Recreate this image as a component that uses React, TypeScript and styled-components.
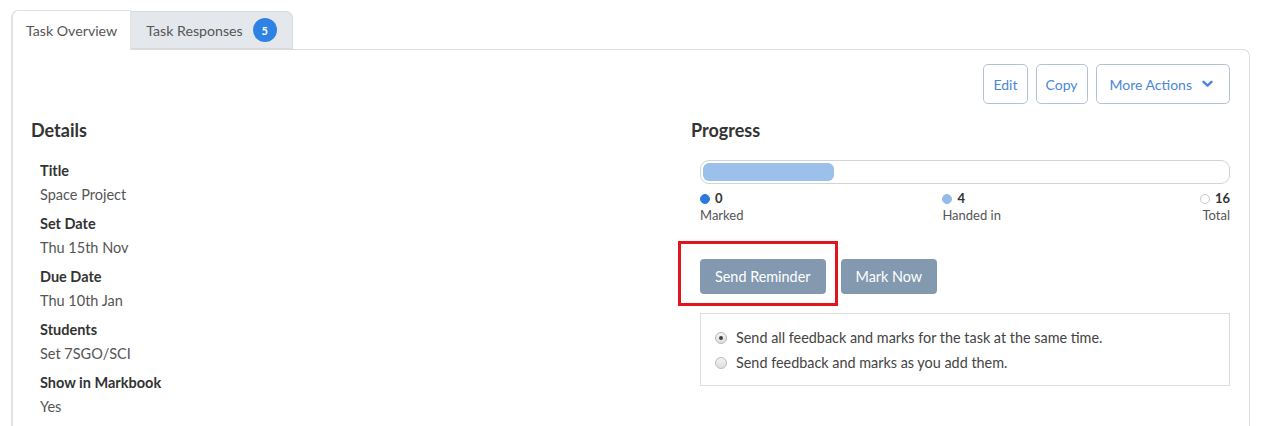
import React from "react";
import styled, { createGlobalStyle } from "styled-components";

const Global = createGlobalStyle`
  html, body { margin: 0; padding: 0; background: #fff; }
  body { font-family: Lato, "Open Sans", sans-serif; color: #333; }
  * { box-sizing: border-box; }
`;

const Page = styled.div`
  padding: 10px 30px 0 11px;
  height: 426px;
  overflow: hidden;
`;

const Tabs = styled.div`
  display: flex;
  align-items: flex-start;
  position: relative;
  z-index: 1;
`;

const Tab = styled.div<{ $active?: boolean }>`
  display: flex;
  align-items: center;
  gap: 10px;
  font-size: 14.2px;
  color: #555;
  padding: ${(p) => (p.$active ? "0 13px 0 13px" : "0 15px 0 15px")};
  height: ${(p) => (p.$active ? "40px" : "38px")};
  margin-top: ${(p) => (p.$active ? "0" : "1px")};
  background: ${(p) => (p.$active ? "#fff" : "#e4e8ec")};
  border: 1px solid ${(p) => (p.$active ? "#e2e2e2" : "#d6dbe0")};
  border-bottom: ${(p) => (p.$active ? "none" : "1px solid #d6dbe0")};
  border-left-width: ${(p) => (p.$active ? "2px" : "0")};
  border-radius: ${(p) => (p.$active ? "7px 0 0 0" : "0 7px 0 0")};
`;

const Badge = styled.span`
  display: inline-flex;
  align-items: center;
  justify-content: center;
  width: 24px;
  height: 24px;
  border-radius: 50%;
  background: #2e82e3;
  color: #fff;
  font-size: 11px;
  font-weight: 700;
`;

const Panel = styled.div`
  margin-top: -1px;
  border: 1px solid #dcdcdc;
  border-left: 2px solid #e2e2e2;
  border-bottom: none;
  border-radius: 0 7px 0 0;
  padding: 14px 19px 0 18px;
  height: 400px;
`;

const Toolbar = styled.div`
  display: flex;
  justify-content: flex-end;
  gap: 8px;
`;

const OutlineButton = styled.button<{ $wide?: boolean }>`
  height: 40px;
  padding: ${(p) => (p.$wide ? "0 16px 0 13px" : "0 9px")};
  border: 1px solid #b3c2d5;
  border-radius: 5px;
  background: #fff;
  color: #4a86d8;
  font-family: inherit;
  font-size: 14px;
  display: inline-flex;
  align-items: center;
  gap: 10px;
`;

const Columns = styled.div`
  display: grid;
  grid-template-columns: 660px 1fr;
  margin-top: 14px;
`;

const Heading = styled.h2`
  margin: 0;
  font-size: 18px;
  line-height: 24px;
  font-weight: 700;
  color: #333;
`;

const DetailList = styled.dl`
  margin: 17px 0 0 9px;
`;

const Label = styled.dt`
  font-size: 14.5px;
  line-height: 24px;
  font-weight: 700;
  color: #333;
`;

const Value = styled.dd`
  margin: 0 0 5px;
  font-size: 14.5px;
  line-height: 24px;
  color: #555;
`;

const RightCol = styled.div`
  padding-left: 9px;
  & > h2 { margin-left: -9px; }
`;

const Bar = styled.div`
  margin-top: 18px;
  height: 24px;
  border: 1px solid #d3d3d3;
  border-radius: 9px;
  padding: 2px;
`;

const Fill = styled.div`
  height: 100%;
  background: #9bc1ea;
  border-radius: 6px;
`;

const Legend = styled.div`
  display: flex;
  justify-content: space-between;
  margin-top: 6px;
`;

const LegendItem = styled.div<{ $right?: boolean }>`
  display: flex;
  flex-direction: column;
  align-items: ${(p) => (p.$right ? "flex-end" : "flex-start")};
  font-size: 13px;
  line-height: 17px;
  color: #555;
`;

const Count = styled.div`
  display: flex;
  align-items: center;
  gap: 5px;
  font-weight: 700;
  color: #333;
`;

const Dot = styled.span<{ $color?: string }>`
  width: 10px;
  height: 10px;
  border-radius: 50%;
  background: ${(p) => p.$color || "#fff"};
  border: 1px solid ${(p) => p.$color || "#c8c8c8"};
`;

const Actions = styled.div`
  display: flex;
  gap: 15px;
  margin-top: 35px;
`;

const SolidButton = styled.button`
  position: relative;
  height: 35px;
  padding: 0 15px;
  border: none;
  border-radius: 4px;
  background: #8299b0;
  color: #fff;
  font-family: inherit;
  font-size: 14.4px;
`;

const Highlight = styled.span`
  position: absolute;
  left: -22px;
  top: -18px;
  width: 160px;
  height: 65px;
  border: 3px solid #e3141d;
  pointer-events: none;
`;

const OptionBox = styled.div`
  margin-top: 19px;
  border: 1px solid #dcdcdc;
  padding: 11px 14px 10px;
`;

const Option = styled.label`
  display: flex;
  align-items: center;
  gap: 9px;
  font-size: 14.4px;
  line-height: 25px;
  color: #444;
`;

const Radio = styled.span<{ $checked?: boolean }>`
  width: 12px;
  height: 12px;
  border-radius: 50%;
  border: 1px solid #b9b9b9;
  background: linear-gradient(#f4f4f4, #dedede);
  display: inline-flex;
  align-items: center;
  justify-content: center;
  &::after {
    content: "";
    width: 4px;
    height: 4px;
    border-radius: 50%;
    background: ${(p) => (p.$checked ? "#444" : "transparent")};
  }
`;

const Chevron = () => (
  <svg width="11" height="8" viewBox="0 0 11 8" aria-hidden>
    <path d="M1.5 1.8 L5.5 5.6 L9.5 1.8" fill="none" stroke="#4a86d8" strokeWidth="2.4" strokeLinecap="round" strokeLinejoin="round" />
  </svg>
);

const details: [string, string][] = [
  ["Title", "Space Project"],
  ["Set Date", "Thu 15th Nov"],
  ["Due Date", "Thu 10th Jan"],
  ["Students", "Set 7SGO/SCI"],
  ["Show in Markbook", "Yes"],
];

export default function App() {
  const handedIn = 4;
  const total = 16;
  return (
    <Page>
      <Global />
      <Tabs>
        <Tab $active>Task Overview</Tab>
        <Tab>
          Task Responses <Badge>5</Badge>
        </Tab>
      </Tabs>
      <Panel>
        <Toolbar>
          <OutlineButton>Edit</OutlineButton>
          <OutlineButton>Copy</OutlineButton>
          <OutlineButton $wide>
            More Actions <Chevron />
          </OutlineButton>
        </Toolbar>
        <Columns>
          <div>
            <Heading>Details</Heading>
            <DetailList>
              {details.map(([k, v]) => (
                <React.Fragment key={k}>
                  <Label>{k}</Label>
                  <Value>{v}</Value>
                </React.Fragment>
              ))}
            </DetailList>
          </div>
          <RightCol>
            <Heading>Progress</Heading>
            <Bar>
              <Fill style={{ width: `${(handedIn / total) * 100}%` }} />
            </Bar>
            <Legend>
              <LegendItem>
                <Count>
                  <Dot $color="#2d7bd8" />0
                </Count>
                Marked
              </LegendItem>
              <LegendItem>
                <Count>
                  <Dot $color="#93bbe9" />4
                </Count>
                Handed in
              </LegendItem>
              <LegendItem $right>
                <Count>
                  <Dot />16
                </Count>
                Total
              </LegendItem>
            </Legend>
            <Actions>
              <SolidButton>
                Send Reminder
                <Highlight />
              </SolidButton>
              <SolidButton>Mark Now</SolidButton>
            </Actions>
            <OptionBox>
              <Option>
                <Radio $checked />
                Send all feedback and marks for the task at the same time.
              </Option>
              <Option>
                <Radio />
                Send feedback and marks as you add them.
              </Option>
            </OptionBox>
          </RightCol>
        </Columns>
      </Panel>
    </Page>
  );
}
